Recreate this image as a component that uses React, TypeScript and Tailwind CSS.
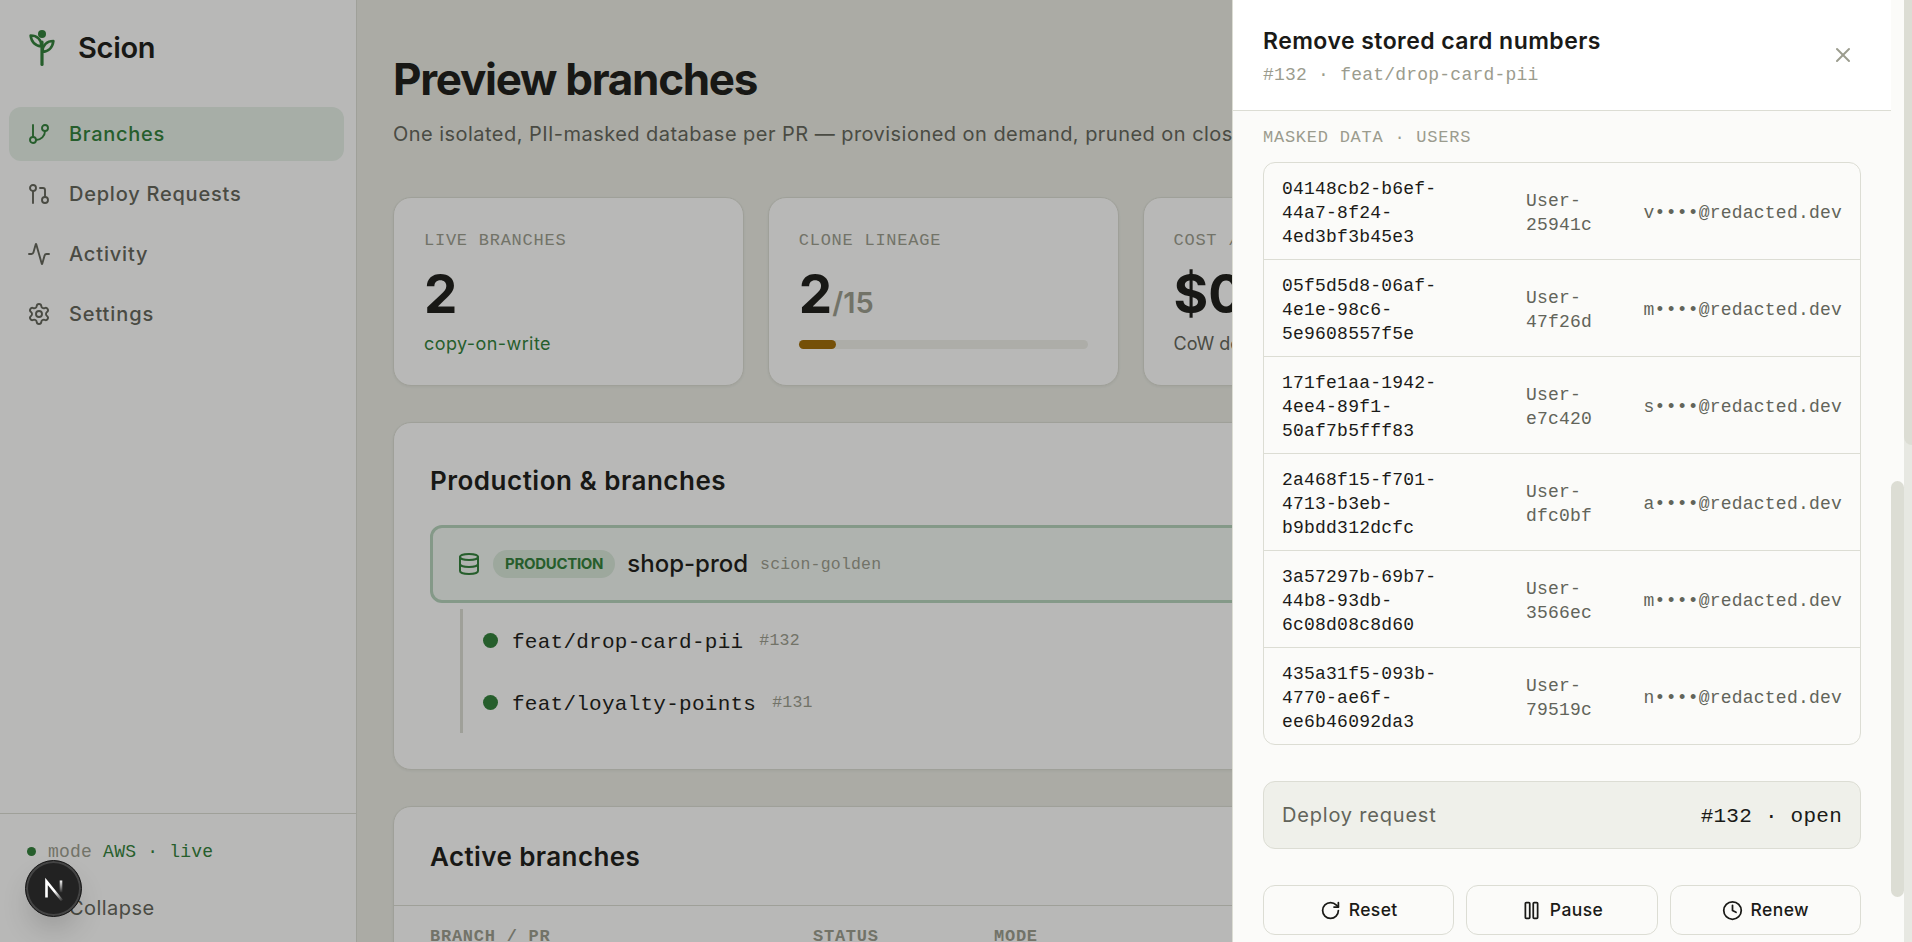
import type { ReactNode } from "react";
import {
  Activity,
  Clock,
  Database,
  GitBranch,
  GitPullRequest,
  Pause,
  RotateCw,
  Settings,
  X,
} from "lucide-react";

const navItems = [
  { label: "Branches", icon: GitBranch, active: true, tracking: "tracking-[0.7px]" },
  { label: "Deploy Requests", icon: GitPullRequest, active: false, tracking: "tracking-[0.77px]" },
  { label: "Activity", icon: Activity, active: false, tracking: "tracking-[0.84px]" },
  { label: "Settings", icon: Settings, active: false, tracking: "tracking-[0.9px]" },
];

const branches = [
  { name: "feat/drop-card-pii", pr: "#132" },
  { name: "feat/loyalty-points", pr: "#131" },
];

const maskedUsers = [
  { id: "04148cb2-b6ef-44a7-8f24-4ed3bf3b45e3", name: "User-25941c", email: "v••••@redacted.dev" },
  { id: "05f5d5d8-06af-4e1e-98c6-5e9608557f5e", name: "User-47f26d", email: "m••••@redacted.dev" },
  { id: "171fe1aa-1942-4ee4-89f1-50af7b5fff83", name: "User-e7c420", email: "s••••@redacted.dev" },
  { id: "2a468f15-f701-4713-b3eb-b9bdd312dcfc", name: "User-dfc0bf", email: "a••••@redacted.dev" },
  { id: "3a57297b-69b7-44b8-93db-6c08d08c8d60", name: "User-3566ec", email: "m••••@redacted.dev" },
  { id: "435a31f5-093b-4770-ae6f-ee6b46092da3", name: "User-79519c", email: "n••••@redacted.dev" },
];

const mono = "font-['Liberation_Mono',monospace]";
const card = "rounded-[18px] border border-[#dcddd4] bg-white shadow-[0_1px_3px_rgba(26,26,23,0.06)]";

function Logo() {
  return (
    <svg
      width="26"
      height="36"
      viewBox="0 0 26 36"
      fill="none"
      stroke="currentColor"
      strokeWidth="2.6"
      strokeLinecap="round"
      strokeLinejoin="round"
    >
      <circle cx="13" cy="4" r="4" fill="currentColor" stroke="none" />
      <path d="M13 12v22.4" strokeWidth="3.2" />
      <path d="M12.5 16.2C7 16.2 2.5 12.500 1.600 5.500C8 5.500 12.500 9.500 12.500 16.200Z" />
      <path d="M13.500 21.800C19 21.800 23.500 18 24.400 11C18 11 13.500 15 13.500 21.800Z" />
    </svg>
  );
}

function Sidebar() {
  return (
    <aside className="flex w-[357px] shrink-0 flex-col border-r border-[#dcddd4] bg-white">
      <div className="flex h-[95px] items-center gap-[23px] pl-[29px] text-[#2f7f38]">
        <Logo />
        <span className="text-[29px] font-semibold tracking-[-0.3px] text-[#1a1a17]">Scion</span>
      </div>
      <nav className="mt-3 flex flex-1 flex-col gap-1.5 pr-3 pl-[9px]">
        {navItems.map((item) => (
          <a
            key={item.label}
            className={`flex h-[54px] items-center gap-[18px] rounded-xl px-[18px] text-[20px] font-medium ${
              item.active ? "bg-[#e7f1e9] text-[#2f7f38]" : "text-[#62645a]"
            }`}
          >
            <item.icon size={24} strokeWidth={1.9} />
            <span className={item.tracking}>{item.label}</span>
          </a>
        ))}
      </nav>
      <div className="h-[129px] border-t border-[#dcddd4] px-[27px] pt-6">
        <div className={`flex h-[27px] items-center ${mono} text-[18px] tracking-[0.22px]`}>
          <span className="mr-3 size-[9px] rounded-full bg-[#2f7f38]" />
          <span className="pt-0.5 whitespace-pre text-[#9b9c8e]">mode </span>
          <span className="pt-0.5 text-[#2f7f38]">AWS · live</span>
        </div>
        <div className="mt-[29px] pl-[42px] text-[20px] leading-7 tracking-[0.45px] text-[#62645a]">Collapse</div>
      </div>
    </aside>
  );
}

function StatCard({ label, value, children }: { label: string; value: ReactNode; children: ReactNode }) {
  return (
    <div className={`h-[189px] px-[30px] pt-[31px] ${card}`}>
      <div className={`${mono} text-[17px] leading-6 tracking-[0.75px] text-[#9b9c8e]`}>{label}</div>
      <div className="mt-3.5 h-[54px] text-[53px] leading-[54px] font-bold text-[#1a1a17]">{value}</div>
      {children}
    </div>
  );
}

function Main() {
  return (
    <main className="min-w-0 flex-1 overflow-hidden bg-[#ecede6] px-9">
      <h1 className="mt-[50px] text-[44px] leading-[58px] font-bold tracking-[-1.28px] text-[#1a1a17]">
        Preview branches
      </h1>
      <p className="mt-3 text-[20px] leading-7 tracking-[0.46px] whitespace-nowrap text-[#62645a]">
        One isolated, PII-masked database per PR — provisioned on demand, pruned on close.
      </p>
      <div className="mt-[49px] grid grid-cols-4 gap-6">
        <StatCard label="LIVE BRANCHES" value="2">
          <div className="mt-[11px] text-[18px] leading-6 tracking-[0.42px] text-[#2f7f38]">copy-on-write</div>
        </StatCard>
        <StatCard
          label="CLONE LINEAGE"
          value={
            <>
              2<span className="text-[29px] leading-none font-semibold text-[#9b9c8e]">/15</span>
            </>
          }
        >
          <div className="mt-[19px] h-[9px] rounded-full bg-[#eff0ea]">
            <div className="h-full w-[37px] rounded-full bg-[#a06b05]" />
          </div>
        </StatCard>
        <StatCard label="COST / DAY" value="$0.04">
          <div className="mt-[11px] text-[18px] leading-6 text-[#62645a]">CoW delta only</div>
        </StatCard>
        <StatCard label="PII LEAKS" value="0">
          <div className="mt-[11px] text-[18px] leading-6 text-[#2f7f38]">masked</div>
        </StatCard>
      </div>

      <section className={`mt-9 h-[348px] px-9 pt-10 ${card}`}>
        <h2 className="text-[26px] leading-9 font-semibold tracking-[0.5px] text-[#1a1a17]">
          Production &amp; branches
        </h2>
        <div className="mt-[26px] flex h-[78px] items-center rounded-xl border-[3px] border-[#b5d3bc] bg-[#f3f8f4] px-6">
          <Database size={24} strokeWidth={2} className="text-[#2f7f38]" />
          <span className="ml-3 flex h-7 items-center rounded-full bg-[#d8e8da] px-3 text-[15px] font-bold tracking-[-0.3px] text-[#2f7f38]">
            PRODUCTION
          </span>
          <span className="ml-3 text-[24px] font-medium text-[#1a1a17]">shop-prod</span>
          <span className={`ml-3 pt-[3px] ${mono} text-[16.5px] tracking-[0.2px] text-[#9b9c8e]`}>scion-golden</span>
        </div>
        <div className="mt-1.5 ml-[30px] border-l-[3px] border-[#dcddd4]">
          {branches.map((branch) => (
            <div key={branch.pr} className="flex h-[62px] items-center pl-[20px]">
              <span className="size-[15px] rounded-full bg-[#2f7f38]" />
              <span className={`ml-3.5 pt-[5px] ${mono} text-[21px] tracking-[0.25px] text-[#1a1a17]`}>
                {branch.name}
              </span>
              <span className={`ml-4 pt-0.5 ${mono} text-[16.5px] tracking-[0.2px] text-[#9b9c8e]`}>{branch.pr}</span>
            </div>
          ))}
        </div>
      </section>

      <section className={`mt-9 h-[347px] ${card}`}>
        <h2 className="h-[99px] border-b border-[#dcddd4] px-9 pt-8 text-[26px] leading-9 font-semibold tracking-[0.4px] text-[#1a1a17]">
          Active branches
        </h2>
        <div className={`flex px-9 pt-[19px] ${mono} text-[17px] leading-6 font-bold tracking-[0.75px] text-[#9b9c8e]`}>
          <span className="w-[383px]">BRANCH / PR</span>
          <span className="w-[181px]">STATUS</span>
          <span>MODE</span>
        </div>
      </section>
    </main>
  );
}

function ActionButton({ icon, label }: { icon: ReactNode; label: string }) {
  return (
    <button className="flex h-[50px] items-center justify-center gap-2 rounded-xl border border-[#dcddd4] text-[17.5px] font-medium tracking-[0.4px] text-[#1a1a17]">
      {icon}
      {label}
    </button>
  );
}

function Drawer() {
  return (
    <div className="absolute inset-y-0 right-2 flex w-[672px] border-l border-[#dcddd4] bg-[#fbfbf9]">
      <div className="flex min-w-0 flex-1 flex-col">
        <header className="flex h-[111px] shrink-0 items-center justify-between border-b border-[#dcddd4] bg-white pr-9 pl-[30px]">
          <div className="pt-1">
            <h3 className="text-[23px] leading-8 font-semibold tracking-[0.45px] text-[#1a1a17]">
              Remove stored card numbers
            </h3>
            <p className={`mt-1 ${mono} text-[18px] leading-7 tracking-[0.22px] text-[#9b9c8e]`}>
              #132 · feat/drop-card-pii
            </p>
          </div>
          <X size={24} strokeWidth={2} className="text-[#9b9c8e]" />
        </header>
        <div className="px-[30px] pt-[15px]">
          <div className={`${mono} text-[17px] leading-6 tracking-[0.75px] text-[#9b9c8e]`}>MASKED DATA · USERS</div>
          <div className="mt-3 rounded-xl border border-[#dcddd4]">
            {maskedUsers.map((user) => (
              <div
                key={user.id}
                className={`flex h-[97px] items-center border-b border-[#dcddd4] px-[18px] pt-[3px] last:h-24 last:border-b-0 ${mono} text-[18px] leading-6 tracking-[0.22px]`}
              >
                <span className="w-[180px] text-[#1a1a17]">{user.id}</span>
                <span className="ml-16 w-[84px] text-[#62645a]">{user.name}</span>
                <span className="ml-auto text-[#62645a]">{user.email}</span>
              </div>
            ))}
          </div>
          <div className="mt-9 flex h-[68px] items-center justify-between rounded-xl border border-[#dcddd4] bg-[#eff0ea] px-[18px]">
            <span className="text-[20px] tracking-[0.8px] text-[#62645a]">Deploy request</span>
            <span className={`pt-[3px] ${mono} text-[21px] tracking-[0.25px] text-[#1a1a17]`}>#132 · open</span>
          </div>
          <div className="mt-9 grid grid-cols-3 gap-3">
            <ActionButton icon={<RotateCw size={21} strokeWidth={2} />} label="Reset" />
            <ActionButton icon={<Pause size={21} strokeWidth={2} />} label="Pause" />
            <ActionButton icon={<Clock size={21} strokeWidth={2} />} label="Renew" />
          </div>
        </div>
      </div>
      <div className="w-[13px] shrink-0 pt-[481px]">
        <div className="h-[416px] rounded-full bg-[#dcddd4]" />
      </div>
    </div>
  );
}

export default function App() {
  return (
    <div className="relative flex h-screen w-full overflow-hidden font-[Inter,sans-serif]">
      <Sidebar />
      <Main />
      <div className="w-2 shrink-0 bg-[#e7e8e2]">
        <div className="h-[445px] rounded-bl-lg bg-[#dcddd4]" />
      </div>
      <div className="absolute inset-y-0 right-2 left-0 bg-[#14140f]/30" />
      <Drawer />
      <button className="absolute bottom-[25px] left-[25px] flex size-[57px] items-center justify-center rounded-full border border-[#171717] bg-[#222] shadow-[inset_0_0_0_2px_#444,0_16px_32px_-8px_rgba(0,0,0,0.24)]">
        <svg width="20" height="24" viewBox="0 0 20 24" fill="none">
          <defs>
            <linearGradient id="diag" x1="11" y1="14" x2="19" y2="24" gradientUnits="userSpaceOnUse">
              <stop stopColor="#fff" />
              <stop offset="1" stopColor="#fff" stopOpacity="0" />
            </linearGradient>
            <linearGradient id="stem" x1="17" y1="3" x2="17" y2="16" gradientUnits="userSpaceOnUse">
              <stop stopColor="#fff" />
              <stop offset="1" stopColor="#fff" stopOpacity="0" />
            </linearGradient>
          </defs>
          <path d="M2.500 20.500V4.500L18 23.500" stroke="url(#diag)" strokeWidth="2.600" />
          <path d="M17 3.500v12" stroke="url(#stem)" strokeWidth="2.600" />
        </svg>
      </button>
    </div>
  );
}
